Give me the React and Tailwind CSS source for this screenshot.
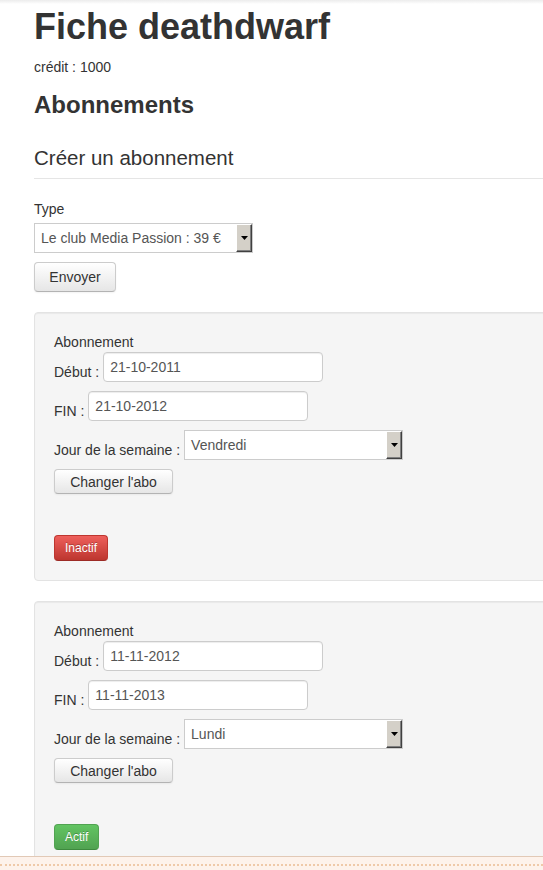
import React from 'react';

function SelectArrow() {
  return (
    <div className="flex h-full w-[16px] shrink-0 items-center justify-center border border-t-white border-l-white border-r-[#404040] border-b-[#404040] bg-[#d4d0c8] shadow-[inset_-1px_-1px_0_#808080]">
      <svg width="7" height="4" viewBox="0 0 7 4">
        <polygon points="0,0 7,0 3.5,4" fill="#000" />
      </svg>
    </div>
  );
}

function FakeSelect({ value }) {
  return (
    <div className="flex h-[30px] w-[219px] items-center border border-[#ccc] bg-white">
      <span className="flex-1 truncate pl-[6px] text-[#555]">{value}</span>
      <SelectArrow />
    </div>
  );
}

function TextInput({ value }) {
  return (
    <input
      readOnly
      defaultValue={value}
      className="h-[30px] w-[220px] rounded-[4px] border border-[#ccc] bg-white px-[6px] text-[#555] shadow-[inset_0_1px_1px_rgba(0,0,0,0.075)] outline-none"
    />
  );
}

function Button({ children, className = '' }) {
  return (
    <button
      className={`rounded-[4px] border border-[#ccc] border-b-[#b3b3b3] bg-linear-to-b from-white to-[#e6e6e6] text-[#333] shadow-[inset_0_1px_0_rgba(255,255,255,0.2),0_1px_2px_rgba(0,0,0,0.05)] ${className}`}
    >
      {children}
    </button>
  );
}

function Subscription({ debut, fin, jour, active }) {
  return (
    <div className="mt-[20px] w-[900px] rounded-[4px] border border-[#e3e3e3] bg-[#f5f5f5] p-[19px] shadow-[inset_0_1px_1px_rgba(0,0,0,0.05)]">
      <div>Abonnement</div>
      <div className="flex items-end gap-1">
        <span>Début :</span>
        <TextInput value={debut} />
      </div>
      <div className="mt-[9px] flex items-end gap-1">
        <span>FIN :</span>
        <TextInput value={fin} />
      </div>
      <div className="mt-[9px] flex items-end gap-1">
        <span>Jour de la semaine :</span>
        <FakeSelect value={jour} />
      </div>
      <Button className="mt-[9px] block h-[25px] w-[119px]">Changer l'abo</Button>

      {active ? (
        <button className="mt-[41px] block h-[26px] rounded-[4px] border border-[#51a351] border-b-[#3e8a3e] bg-linear-to-b from-[#62c462] to-[#51a351] px-[10px] text-[12px] text-white [text-shadow:0_-1px_0_rgba(0,0,0,0.25)]">
          Actif
        </button>
      ) : (
        <button className="mt-[41px] block h-[26px] rounded-[4px] border border-[#bd362f] border-b-[#9c2a25] bg-linear-to-b from-[#ee5f5b] to-[#bd362f] px-[10px] text-[12px] text-white [text-shadow:0_-1px_0_rgba(0,0,0,0.25)]">
          Inactif
        </button>
      )}
    </div>
  );
}

export default function App() {
  return (
    <div className="relative h-[870px] w-[543px] overflow-hidden bg-white font-['Liberation_Sans',Arial,sans-serif] text-[14px] leading-[20px] text-[#333]">
      {/* navbar shadow */}
      <div className="h-[4px] bg-linear-to-b from-[#ececec] to-white" />

      <div className="w-[940px] pl-[34px]">
        <h1 className="mt-[3px] text-[36px] font-bold leading-[40px]">Fiche deathdwarf</h1>
        <p className="mt-[10px]">crédit : 1000</p>

        <h2 className="mt-[8px] text-[24px] font-bold leading-[40px]">Abonnements</h2>

        <div className="mt-[13px] border-b border-[#e5e5e5] text-[20.5px] leading-[40px]">
          Créer un abonnement
        </div>

        <div className="mt-[20px] mb-[4px]">Type</div>
        <FakeSelect value="Le club Media Passion : 39 €" />
        <Button className="mt-[9px] block h-[30px] w-[82px]">Envoyer</Button>

        <Subscription debut="21-10-2011" fin="21-10-2012" jour="Vendredi" active={false} />
        <Subscription debut="11-11-2012" fin="11-11-2013" jour="Lundi" active />
      </div>

      {/* bottom bar */}
      <div className="absolute bottom-0 left-0 right-0 h-[14px] border-t border-[#e2c9b6] bg-[#fdf2eb]">
        <div className="mt-[7px] border-t-2 border-dotted border-[#efc9a8]" />
      </div>
    </div>
  );
}
